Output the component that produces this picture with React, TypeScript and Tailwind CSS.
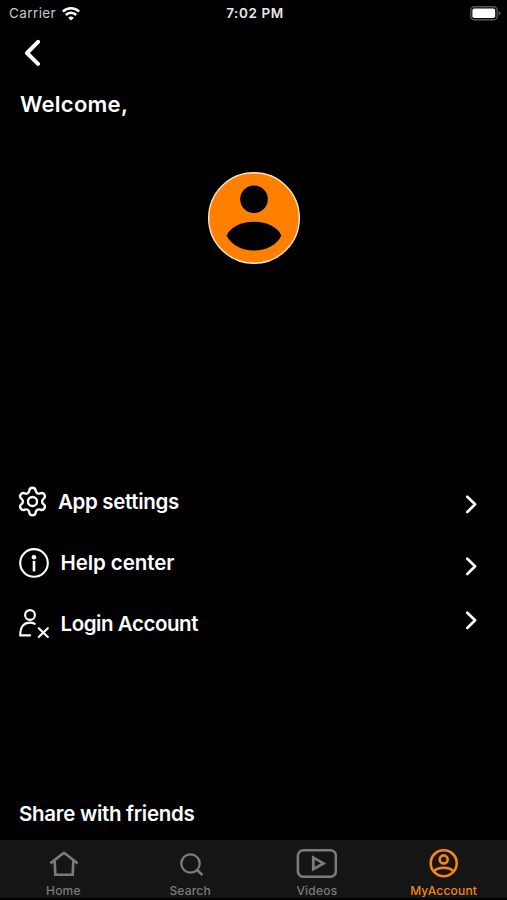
import React from 'react';

function WifiIcon() {
  return (
    <svg width="18" height="14" viewBox="0 0 18 14" fill="none" stroke="white" strokeWidth="2.5">
      <path d="M0.900 4.700a11.500 11.500 0 0 1 16.200 0" />
      <path d="M3.800 8a7.300 7.300 0 0 1 10.400 0" />
      <path d="M9 13.600L6.200 10.800a4 4 0 0 1 5.600 0z" fill="white" stroke="none" />
    </svg>
  );
}

function BatteryIcon() {
  return (
    <svg width="31" height="15" viewBox="0 0 31 15" fill="none">
      <rect x="0.800" y="0.800" width="26.400" height="13" rx="3.600" stroke="#575757" strokeWidth="1.400" />
      <rect x="2.400" y="2.600" width="22.800" height="9.400" rx="1.800" fill="white" />
      <path d="M28.600 5c1.500.5 2 1.400 2 2.300s-.5 1.800-2 2.300z" fill="#575757" />
    </svg>
  );
}

function BackIcon() {
  return (
    <svg width="16" height="28" viewBox="0 0 16 28" fill="none" stroke="white" strokeWidth="4" strokeLinecap="round" strokeLinejoin="round">
      <path d="M14 2.800L3 14l11 10.900" />
    </svg>
  );
}

function ChevronIcon() {
  return (
    <svg width="12" height="19" viewBox="0 0 12 19" fill="none" stroke="white" strokeWidth="2.600" strokeLinecap="round" strokeLinejoin="round">
      <path d="M2.300 1.700l7.800 7.600-7.800 7.700" />
    </svg>
  );
}

function GearIcon() {
  return (
    <svg width="33" height="33" viewBox="0 0 24 24" className="-ml-[3px] shrink-0" fill="none" stroke="white" strokeWidth="1.700" strokeLinejoin="round">
      <path d="M9.671 4.136a2.340 2.340 0 0 1 4.659 0 2.340 2.340 0 0 0 3.319 1.915 2.340 2.340 0 0 1 2.330 4.033 2.340 2.340 0 0 0 0 3.831 2.340 2.340 0 0 1-2.330 4.033 2.340 2.340 0 0 0-3.319 1.915 2.340 2.340 0 0 1-4.659 0 2.340 2.340 0 0 0-3.320-1.915 2.340 2.340 0 0 1-2.330-4.033 2.340 2.340 0 0 0 0-3.831A2.340 2.340 0 0 1 6.350 6.051a2.340 2.340 0 0 0 3.319-1.915" />
      <circle cx="12" cy="12" r="3.300" />
    </svg>
  );
}

function InfoIcon() {
  return (
    <svg width="30" height="30" viewBox="0 0 30 30" fill="none" stroke="white" strokeWidth="2.100">
      <circle cx="15" cy="14.900" r="13.800" />
      <circle cx="15" cy="9.300" r="2.300" fill="white" stroke="none" />
      <path d="M15 12.900v10.500" strokeWidth="2.600" />
    </svg>
  );
}

function UserXIcon() {
  return (
    <svg width="30" height="30" viewBox="0 0 30 30" fill="none" stroke="white" strokeWidth="2.100" strokeLinecap="round">
      <circle cx="11" cy="6" r="4.900" />
      <path d="M15.800 14.800C14.400 14 12.800 13.600 11 13.600c-6 0-9.800 4-9.800 12.800h9.900" strokeLinejoin="round" />
      <path d="M19.800 19.200l9 8.800M28.800 19.200L19.800 28" />
    </svg>
  );
}

function Avatar() {
  return (
    <svg width="92" height="92" viewBox="0 0 92 92">
      <circle cx="46" cy="46" r="45.300" fill="#ff8000" stroke="#ffe6cc" strokeWidth="1.400" />
      <circle cx="46" cy="27.200" r="13.800" fill="black" />
      <path d="M18.600 63.500C22.500 55 33 49.800 46 49.800S69.500 55 73.400 63.500C69.500 72.300 58.500 78.600 46 78.600S22.500 72.300 18.600 63.500z" fill="black" />
    </svg>
  );
}

function HomeIcon() {
  return (
    <svg width="30" height="30" viewBox="0 0 30 30" fill="none" stroke="#7b7b7b" strokeWidth="2.600">
      <path d="M2.300 15.400L16 4.800l13.700 10.600" strokeLinejoin="round" />
      <path d="M6.700 12.700l.6 14h17.400l.6-14" />
    </svg>
  );
}

function SearchIcon() {
  return (
    <svg width="30" height="30" viewBox="0 0 30 30" fill="none" stroke="#7b7b7b" strokeWidth="2.300">
      <circle cx="15.500" cy="15.500" r="9.200" />
      <path d="M21.800 21.800l5.600 5.200" strokeWidth="2.600" />
    </svg>
  );
}

function VideosIcon() {
  return (
    <svg width="41" height="30" viewBox="0 0 41 30" fill="none" stroke="#7b7b7b">
      <rect x="1.900" y="2.200" width="38" height="26.600" rx="5.500" strokeWidth="2.600" />
      <path d="M17.300 9.600v11.600l10.200-5.800z" strokeWidth="2.800" />
    </svg>
  );
}

function AccountIcon() {
  return (
    <svg width="30" height="30" viewBox="0 0 30 30" fill="none" stroke="#f68512" strokeWidth="2.600">
      <circle cx="14.700" cy="15.200" r="13" />
      <circle cx="14.700" cy="11.400" r="4" />
      <path d="M4.900 23.400C7.200 20.800 10.700 19.800 14.700 19.800s7.500 1 9.800 3.600" />
    </svg>
  );
}

const menuItems = [
  { label: 'App settings', icon: <GearIcon />, rowClass: 'gap-[9px]', labelClass: 'tracking-[-0.33px]', chevronClass: 'pt-[6px]' },
  { label: 'Help center', icon: <InfoIcon />, rowClass: 'gap-[11.500px]', labelClass: 'tracking-[-0.08px]', chevronClass: 'pt-[8px]' },
  { label: 'Login Account', icon: <UserXIcon />, rowClass: 'gap-[11.500px]', labelClass: 'tracking-[-0.45px]', chevronClass: 'pb-[6px]' },
];

const tabs = [
  { label: 'Home', icon: <HomeIcon />, color: 'text-[#7b7b7b]' },
  { label: 'Search', icon: <SearchIcon />, color: 'text-[#7b7b7b]' },
  { label: 'Videos', icon: <VideosIcon />, color: 'text-[#7b7b7b]' },
  { label: 'MyAccount', icon: <AccountIcon />, color: 'text-[#f68512]' },
];

function StatusBar() {
  return (
    <div className="grid h-[27px] grid-cols-[1fr_auto_1fr] items-center pl-[9px] pr-[6px] font-['Inter',sans-serif]">
      <div className="flex items-center gap-[6px] text-[13.5px] text-[#c9c9c9]">
        <span className="tracking-[0.4px]">Carrier</span>
        <WifiIcon />
      </div>
      <span className="text-center text-[13.5px] font-semibold tracking-[0.6px] text-[#e8e8e8]">7:02 PM</span>
      <div className="flex justify-end">
        <BatteryIcon />
      </div>
    </div>
  );
}

export default function App() {
  return (
    <div className="flex h-[900px] w-[507px] flex-col overflow-hidden bg-black font-['Inter',sans-serif] text-white">
      <StatusBar />
      <button className="ml-[24px] mt-[12px] h-[28px] w-[16px]" aria-label="Back">
        <BackIcon />
      </button>
      <h1 className="ml-5 mt-[22px] text-[22px] font-semibold leading-[30px] tracking-[0.25px]">Welcome,</h1>
      <div className="mt-[53px] flex justify-center">
        <Avatar />
      </div>
      <nav className="mt-[207px] pl-[19px] pr-[30px]">
        {menuItems.map((item) => (
          <button key={item.label} className="flex h-[61px] w-full items-center justify-between">
            <span className={`flex items-center ${item.rowClass}`}>
              {item.icon}
              <span className={`text-[20.5px] font-semibold leading-[30px] ${item.labelClass}`}>{item.label}</span>
            </span>
            <span className={item.chevronClass}>
              <ChevronIcon />
            </span>
          </button>
        ))}
      </nav>
      <h2 className="mb-[11px] ml-[19px] mt-auto text-[20.5px] font-semibold leading-[30px] tracking-[-0.28px]">Share with friends</h2>
      <div className="grid h-[60px] grid-cols-4 border-b-2 border-black bg-[#151515] pt-[8px]">
        {tabs.map((tab) => (
          <button key={tab.label} className={`flex flex-col items-center ${tab.color}`}>
            {tab.icon}
            <span className="mt-[5px] text-[12px] font-medium leading-[16px] tracking-[0.2px]">{tab.label}</span>
          </button>
        ))}
      </div>
    </div>
  );
}
